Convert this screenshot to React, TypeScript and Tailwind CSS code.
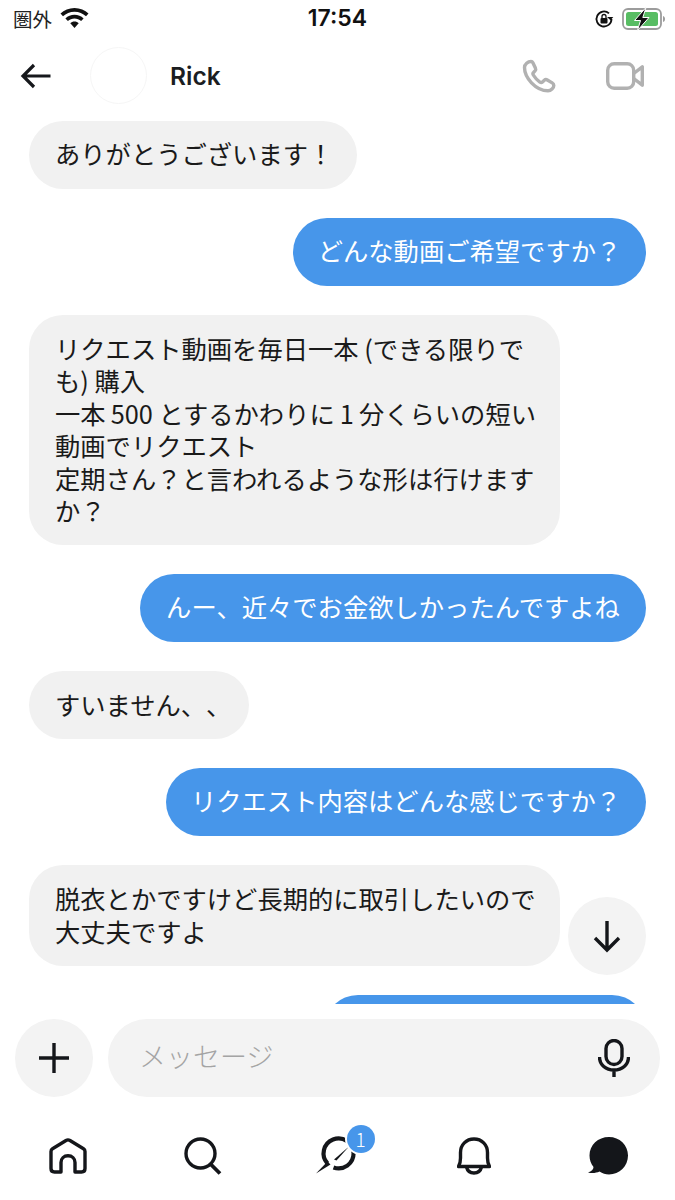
const FONT = "font-['Noto_Sans_CJK_JP','Noto_Sans',sans-serif]";

const Received = ({ lines, className }: { lines: string[]; className: string }) => (
    <div className={`rounded-[34px] bg-[#f1f1f1] px-[26px] text-[25.3px] leading-[32.4px] text-[#1a1a1a] [text-spacing-trim:space-all] ${className}`}>
        {lines.map((line) => (
            <div key={line} className="whitespace-nowrap">{line}</div>
        ))}
    </div>
);

const Sent = ({ text, width }: { text: string; width: string }) => (
    <div className={`self-end flex h-[68px] items-center justify-center rounded-[34px] bg-[#4796ea] pb-[3px] text-[25.3px] whitespace-nowrap text-white [text-spacing-trim:space-all] ${width}`}>
        {text}
    </div>
);

const WifiIcon = () => (
    <svg width="29" height="21" viewBox="0 0 29 21" fill="#111">
        <path d="M14.5 0C9 0 4 2.100 0.500 5.600L3 8.300C6 5.400 10 3.700 14.500 3.700S23 5.400 26 8.300L28.500 5.600C25 2.100 20 0 14.500 0Z" />
        <path d="M14.500 6.800C11 6.800 7.800 8.100 5.400 10.500L7.900 13.100C9.700 11.400 12 10.400 14.500 10.400S19.300 11.400 21.100 13.100L23.600 10.500C21.200 8.100 18 6.800 14.500 6.800Z" />
        <path d="M14.500 13.500C12.900 13.500 11.400 14.100 10.300 15.200L14.500 20L18.700 15.200C17.600 14.100 16.100 13.500 14.500 13.500Z" />
    </svg>
);

const OrientationLockIcon = () => (
    <svg width="20" height="20" viewBox="0 0 20 20" fill="none">
        <path d="M17.500 10A7.500 7.500 0 1 1 15 4.400" stroke="#111" strokeWidth="1.800" />
        <path d="M13.500 10.500L19.800 10.500L17 13.800Z" fill="#111" transform="translate(-0.500 -2.500)" />
        <rect x="6.500" y="9" width="7" height="5.500" rx="1" fill="#111" />
        <path d="M8 9V7.500a2 2 0 0 1 4 0V9" stroke="#111" strokeWidth="1.300" />
    </svg>
);

const BatteryIcon = () => (
    <svg width="44" height="24" viewBox="0 0 44 24" fill="none">
        <rect x="1" y="2" width="38" height="20" rx="5" stroke="#9c9c9c" strokeWidth="1.800" />
        <rect x="4" y="5" width="32" height="14" rx="2.500" fill="#58bd63" />
        <path d="M41 9V15C42.500 14.500 43 13.500 43 12S42.500 9.500 41 9Z" fill="#9c9c9c" />
        <path d="M24 0.500L12.500 13.500H18.500L15.500 23.500L27 10.500H20.800Z" fill="#111" stroke="#fff" strokeWidth="1" />
    </svg>
);

const PhoneIcon = () => (
    <svg width="34" height="34" viewBox="0 0 34 34" fill="none">
        <path
            d="M9 2.500C6 2.500 2.500 5 2.500 8.500C2.500 14 5.500 19.500 9.500 23.800C14 28.500 20.500 31.800 26 31.800C29 31.800 31.800 29 31.800 26.500C31.800 25.300 31.200 24.500 30.200 23.900L25.300 21C24.300 20.400 23.200 20.500 22.300 21.300L20.500 23C19.700 23.700 18.800 23.700 17.900 23.100C15.500 21.400 12.800 18.500 11.300 16C10.700 15 10.800 14.200 11.500 13.500L13 11.900C13.800 11 13.900 10 13.400 9L10.900 3.800C10.500 3 9.900 2.500 9 2.500Z"
            stroke="#b1b1b1"
            strokeWidth="3.400"
            strokeLinejoin="round"
        />
    </svg>
);

const VideoIcon = () => (
    <svg width="38" height="28" viewBox="0 0 38 28" fill="none">
        <rect x="1.700" y="1.700" width="26" height="24.600" rx="6.500" stroke="#b1b1b1" strokeWidth="3.400" />
        <path d="M27.700 11.500L36.300 4.800V23.200L27.700 16.500" stroke="#b1b1b1" strokeWidth="3.400" strokeLinejoin="round" />
    </svg>
);

const HomeIcon = () => (
    <svg width="38" height="36" viewBox="0 0 38 36" fill="none">
        <path
            d="M2 13.500C2 12.300 2.500 11.400 3.500 10.800L17 2.500C18.300 1.700 19.700 1.700 21 2.500L34.500 10.800C35.500 11.400 36 12.300 36 13.500V30.500C36 32.700 34.700 34 32.500 34H26V24.500C26 20.500 23 17.800 19 17.800S12 20.500 12 24.500V34H5.500C3.300 34 2 32.700 2 30.500Z"
            stroke="#14161a"
            strokeWidth="3.400"
            strokeLinejoin="round"
        />
    </svg>
);

const SearchIcon = () => (
    <svg width="38" height="38" viewBox="0 0 38 38" fill="none">
        <circle cx="16.500" cy="16.500" r="14.500" stroke="#14161a" strokeWidth="3.400" />
        <path d="M26.500 27L36 36.500" stroke="#14161a" strokeWidth="3.800" />
    </svg>
);

const MessengerIcon = () => (
    <svg width="40" height="40" viewBox="0 0 40 40" fill="none" className="overflow-visible">
        <path d="M7.500 27.500A15 15 0 1 1 13.500 31.500" stroke="#14161a" strokeWidth="4.200" />
        <path d="M-4 37.500L7.500 25.500L10.500 28.500Z" fill="#14161a" />
        <path d="M14 23.500L29 10.500L16.500 24.500Z" fill="#14161a" />
    </svg>
);

const BellIcon = () => (
    <svg width="34" height="38" viewBox="0 0 34 38" fill="none">
        <path d="M1.500 29.500H32.500C31.200 27.500 30.500 24.500 30.500 21V15.500C30.500 7.800 24.800 2 17 2S3.500 7.800 3.500 15.500V21C3.500 24.500 2.800 27.500 1.500 29.500Z" stroke="#14161a" strokeWidth="3.400" strokeLinejoin="round" />
        <path d="M9.500 30C10.500 34 13.500 36 17 36S23.500 34 24.500 30" stroke="#14161a" strokeWidth="3.400" />
    </svg>
);

const ChatFilledIcon = () => (
    <svg width="40" height="38" viewBox="0 0 40 38" fill="#14161a">
        <path d="M21 0C10 0 1.500 8 1.500 18.500C1.500 23 3 27 5.500 30C5.500 32.500 3.500 34.500 0 35.500C4 36.500 8.500 36 11.500 34.500C14.500 36.500 17.500 37.500 21 37.500C31.500 37.500 40 29 40 18.500S31.500 0 21 0Z" />
    </svg>
);

export default function App() {
    return (
        <div className={`flex h-[1200px] w-[675px] flex-col overflow-hidden bg-white ${FONT}`}>
            {/* Status bar */}
            <div className="flex h-[37px] shrink-0 items-center justify-between pl-[13px] pr-[9px]">
                <div className="flex w-[200px] items-center gap-[8px]">
                    <span className="text-[19.500px] leading-none text-[#222]">圏外</span>
                    <WifiIcon />
                </div>
                <span className="-ml-[4px] font-['Inter'] text-[23px] font-semibold text-[#111]">17:54</span>
                <div className="flex w-[200px] items-center justify-end gap-[8px]">
                    <OrientationLockIcon />
                    <BatteryIcon />
                </div>
            </div>

            {/* Header */}
            <div className="flex h-[78px] shrink-0 items-center pl-[20px] pr-[31px]">
                <svg width="32" height="26" viewBox="0 0 32 26" fill="none">
                    <path d="M30.500 13H3M14 2L3 13L14 24" stroke="#16181c" strokeWidth="3.200" />
                </svg>
                <div className="mb-[1px] ml-[38px] h-[57px] w-[57px] rounded-full border border-[#f6f6f6]" />
                <span className="ml-[23px] font-['Inter'] text-[24.500px] font-semibold text-[#1b1d21]">Rick</span>
                <div className="ml-auto flex items-center gap-[50px]">
                    <PhoneIcon />
                    <VideoIcon />
                </div>
            </div>

            {/* Messages */}
            <div className="relative flex h-[889px] shrink-0 flex-col gap-[29px] overflow-hidden pt-[6px] pl-[29px] pr-[29px]">
                <Received className="flex h-[68px] w-[328px] shrink-0 items-center pb-[3px]" lines={["ありがとうございます！"]} />
                <Sent text="どんな動画ご希望ですか？" width="w-[353px] shrink-0" />
                <Received
                    className="w-[531px] shrink-0 pt-[17px] pb-[19px]"
                    lines={[
                        "リクエスト動画を毎日一本 (できる限りで",
                        "も) 購入",
                        "一本\u2009500 とするかわりに\u20091\u2009分くらいの短い",
                        "動画でリクエスト",
                        "定期さん？と言われるような形は行けます",
                        "か？",
                    ]}
                />
                <Sent text="んー、近々でお金欲しかったんですよね" width="w-[506px] shrink-0" />
                <Received className="flex h-[68px] w-[220px] shrink-0 items-center pb-[3px]" lines={["すいません、、"]} />
                <Sent text="リクエスト内容はどんな感じですか？" width="w-[480px] shrink-0" />
                <Received
                    className="w-[531px] shrink-0 pt-[17px] pb-[19px]"
                    lines={["脱衣とかですけど長期的に取引したいので", "大丈夫ですよ"]}
                />
                <div className="h-[68px] w-[322px] shrink-0 self-end rounded-[34px] bg-[#4796ea]" />

                {/* Scroll-to-bottom button */}
                <div className="absolute top-[782px] right-[29px] flex h-[78px] w-[78px] items-center justify-center rounded-full bg-[#f3f3f3]">
                    <svg width="30" height="34" viewBox="0 0 30 34" fill="none">
                        <path d="M15 2V31M3 19L15 31L27 19" stroke="#14161a" strokeWidth="3.400" />
                    </svg>
                </div>
            </div>

            {/* Composer */}
            <div className="mt-[15px] flex shrink-0 items-center gap-[15px] px-[15px]">
                <div className="flex h-[78px] w-[78px] shrink-0 items-center justify-center rounded-full bg-[#f3f3f3]">
                    <svg width="30" height="30" viewBox="0 0 30 30" fill="none">
                        <path d="M15 0V30M0 15H30" stroke="#14161a" strokeWidth="3.400" />
                    </svg>
                </div>
                <div className="flex h-[78px] flex-1 items-center justify-between rounded-[39px] bg-[#f3f3f3] pl-[31px] pr-[30px]">
                    <span className="pb-[3px] text-[27px] font-light text-[#a4a4a4]">メッセージ</span>
                    <svg width="32" height="38" viewBox="0 0 32 38" fill="none">
                        <rect x="8" y="1.500" width="16" height="24" rx="8" stroke="#14161a" strokeWidth="3.400" />
                        <path d="M1.500 18C1.500 26 8 31 16 31S30.500 26 30.500 18M16 31V38" stroke="#14161a" strokeWidth="3.400" />
                    </svg>
                </div>
            </div>

            {/* Bottom nav */}
            <div className="mt-[39px] flex items-center justify-between pl-[49px] pr-[47px]">
                <HomeIcon />
                <SearchIcon />
                <div className="relative">
                    <MessengerIcon />
                    <div className="absolute -top-[11px] left-[27px] flex h-[28px] w-[28px] items-center justify-center rounded-full bg-[#4796ea] text-[19px] font-light text-white ring-2 ring-white">1</div>
                </div>
                <BellIcon />
                <ChatFilledIcon />
            </div>
        </div>
    );
}
